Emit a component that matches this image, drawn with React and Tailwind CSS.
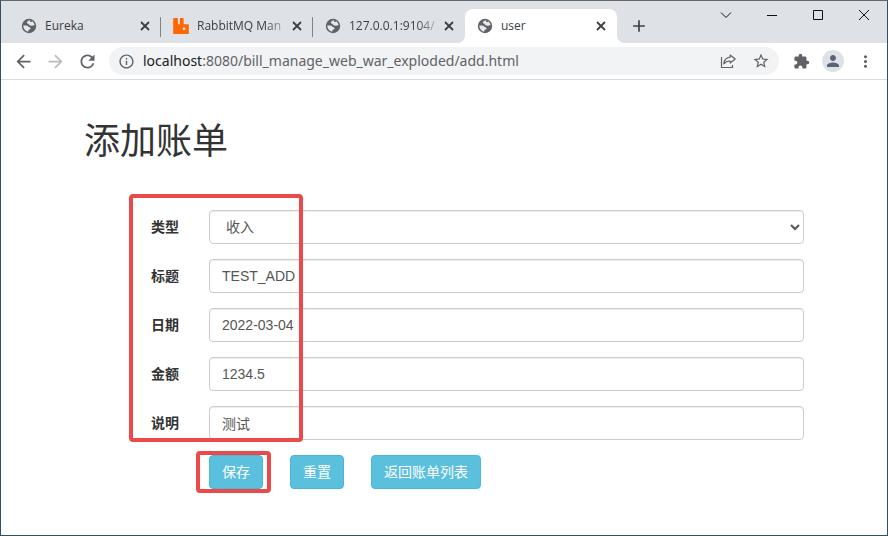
import React from "react";
import {
  MdAdd, MdArrowBack, MdArrowForward, MdRefresh,
  MdInfoOutline, MdStarBorder, MdExtension, MdPerson, MdMoreVert,
} from "react-icons/md";

const GlobeIcon = () => (
  <svg viewBox="0 0 16 16" className="size-4 shrink-0" aria-hidden="true">
    <circle cx="8" cy="8" r="7.2" fill="#5f6368" />
    <path
      fill="#e4e7eb"
      d="M9.200 2.200C7.600 2.500 6 3.400 5.800 4.600c-.1.900.7 1 1.400 1.200.8.200.6 1.300 1.500 1.500 1 .2 1.300.6 2.300.5 1-.2 1.400-.9 2.600-.6-.3-1.700-1.100-3-2.500-3.900-.5.900-1.400 1-1.900.6-.4-.4.2-1 0-1.700zM2.300 7.600c1.300-.3 2.700-.2 3.900.2 1.500.5 1.300 1.500 2.700 1.700.9.200.9 1.200.2 1.800-.8.600-1.600.6-1.800 1.400-.1.500-.2.900-.5 1.100C4.200 13 2.300 10.700 2.300 7.600z"
    />
  </svg>
);

const RabbitIcon = () => (
  <svg viewBox="0 0 16 16" className="size-4 shrink-0" fill="#ff6600" aria-hidden="true">
    <path
      fillRule="evenodd"
      d="M1 0h3.200q.7 0 .7.700v5q0 .6.6.6h.8q.6 0 .6-.6v-5q0-.7.7-.7h2.300q.7 0 .7.700v5q0 .6.6.6h4q.6 0 .6.6v8.500q0 .6-.6.6H.8q-.6 0-.6-.6V.800Q.2 0 1 0zM9.800 10v1.500q0 .6.6.6h1.400q.6 0 .6-.6V10q0-.6-.6-.6h-1.400q-.6 0-.6.6z"
    />
  </svg>
);

const ShareIcon = () => (
  <svg viewBox="0 0 16 16" className="size-4" fill="none" stroke="#5f6368" strokeWidth="1.2" aria-hidden="true">
    <path d="M1.500 4v10.500h11V12" />
    <path strokeLinejoin="round" d="M10.200 2l5 4-5 4V8C7.500 7.900 5.500 8.700 3.800 10.800c.4-3.600 2.600-6.300 6.400-6.700z" />
  </svg>
);

const CloseIcon = () => (
  <svg viewBox="0 0 10 10" className="size-2.5" fill="none" stroke="#3c4043" strokeWidth="1.8" aria-hidden="true">
    <path d="M1 1l8 8M9 1L1 9" />
  </svg>
);

const TABS = [
  { title: "Eureka", icon: "globe", divider: true },
  { title: "RabbitMQ Man", icon: "rabbit", divider: true, faded: true },
  { title: "127.0.0.1:9104/", icon: "globe", faded: true },
  { title: "user", icon: "globe", active: true },
];

function Tab({ title, icon, divider, active, faded }) {
  return (
    <div
      className={
        "relative flex h-[34px] w-[152px] shrink items-center pl-3 pr-2 " +
        (active
          ? "rounded-t-lg bg-white before:absolute before:bottom-0 before:-left-2 before:size-2 before:bg-[radial-gradient(circle_at_0_0,#dee1e6_8px,#fff_8px)] after:absolute after:bottom-0 after:-right-2 after:size-2 after:bg-[radial-gradient(circle_at_100%_0,#dee1e6_8px,#fff_8px)]"
          : "")
      }
    >
      <button type="button" className="flex min-w-0 flex-1 items-center gap-2 text-left">
        {icon === "rabbit" ? <RabbitIcon /> : <GlobeIcon />}
        <span
          className={
            "min-w-0 flex-1 overflow-hidden whitespace-nowrap text-xs text-[#3c4043] " +
            (faded ? "[mask-image:linear-gradient(to_right,#000_68px,transparent_94px)]" : "")
          }
        >
          {title}
        </span>
      </button>
      <button type="button" aria-label={"Close " + title} className="flex w-4 shrink-0 justify-center">
        <CloseIcon />
      </button>
      {divider && <span className="absolute right-0 top-2 h-5 w-px bg-[#808387]" />}
    </div>
  );
}

const WINDOW_CONTROLS = [
  { label: "Search tabs", d: "M1 3.500l5 5 5-5" },
  { label: "Minimize", d: "M1 6.500h10" },
  { label: "Maximize", d: "M1.500 1.500h9v9h-9z" },
  { label: "Close", d: "M1 1l10 10M11 1L1 11" },
];

function Browser() {
  return (
    <header>
      <div className="flex h-[42px] bg-[#dee1e6] pl-2">
        <div className="flex min-w-0 items-end">
          {TABS.map((t) => <Tab key={t.title} {...t} />)}
          <button type="button" aria-label="New tab" className="flex h-[34px] w-11 items-center justify-center">
            <MdAdd className="size-[20px] text-[#3c4043]" />
          </button>
        </div>
        <div className="ml-auto flex">
          {WINDOW_CONTROLS.map((c) => (
            <button key={c.label} type="button" aria-label={c.label} className="flex h-7 w-[46px] items-center justify-center">
              <svg viewBox="0 0 12 12" className="size-3" fill="none" stroke="#111" strokeWidth="1"><path d={c.d} /></svg>
            </button>
          ))}
        </div>
      </div>
      <div className="flex h-[37px] items-center border-b border-[#dadce0] bg-white px-3 text-[#5f6368]">
        <div className="flex gap-[11px]">
          <button type="button" aria-label="Back"><MdArrowBack className="size-[21px]" /></button>
          <button type="button" aria-label="Forward" className="text-[#babcbe]"><MdArrowForward className="size-[21px]" /></button>
          <button type="button" aria-label="Reload"><MdRefresh className="size-[21px]" /></button>
        </div>
        <div className="ml-[11px] flex h-7 min-w-0 flex-1 items-center rounded-full bg-[#f1f3f4] px-[9px]">
          <MdInfoOutline className="size-[17px] shrink-0" />
          <a href="#" className="ml-2 min-w-0 flex-1 truncate font-['Noto_Sans',sans-serif] text-sm">
            <span className="text-[#202124]">localhost</span>:8080/bill_manage_web_war_exploded/add.html
          </a>
          <button type="button" aria-label="Share"><ShareIcon /></button>
          <button type="button" aria-label="Bookmark" className="ml-4"><MdStarBorder className="size-[18px]" /></button>
        </div>
        <button type="button" aria-label="Extensions" className="ml-[14px]"><MdExtension className="size-[17px]" /></button>
        <button type="button" aria-label="Profile" className="ml-3 flex size-[22px] items-center justify-center rounded-full bg-[#dee1e6] text-[#5a6478]">
          <MdPerson className="size-[18px]" />
        </button>
        <button type="button" aria-label="Menu" className="ml-3"><MdMoreVert className="size-[19px]" /></button>
      </div>
    </header>
  );
}

const CONTROL =
  "block h-[34px] w-full rounded border border-[#ccc] bg-white px-3 text-sm text-[#555] shadow-[inset_0_1px_1px_rgba(0,0,0,0.075)]";
const BUTTON =
  "h-[34px] rounded border border-[#46b8da] bg-[#5bc0de] px-3 text-sm text-white";
const MARKER =
  "pointer-events-none absolute rounded-sm border-4 border-[#ec4a4a]";

const FIELDS = [
  { id: "title", label: "标题", value: "TEST_ADD" },
  { id: "date", label: "日期", value: "2022-03-04" },
  { id: "money", label: "金额", value: "1234.5" },
  { id: "explain", label: "说明", value: "测试" },
];

function Row({ id, label, children }) {
  return (
    <div className="flex items-center">
      <label htmlFor={id} className="w-1/6 px-[15px] text-right text-sm font-bold">{label}</label>
      <div className="w-5/6 px-[15px]">{children}</div>
    </div>
  );
}

export default function App() {
  return (
    <div className="flex min-h-screen flex-col border border-[#2f5260] border-t-[#64666a] bg-white font-['Open_Sans','Noto_Sans_CJK_SC',sans-serif]">
      <Browser />
      <main className="mx-auto w-full max-w-[750px] pt-[42px] font-['Liberation_Sans','Noto_Sans_CJK_SC',sans-serif] text-[#333]">
        <h1 className="px-[15px] text-4xl font-normal">添加账单</h1>
        <form className="mt-12" onSubmit={(e) => e.preventDefault()}>
          <div className="relative flex flex-col gap-[15px]">
            <Row id="type" label="类型">
              <select id="type" className={CONTROL} defaultValue="收入">
                <option>收入</option>
                <option>支出</option>
              </select>
            </Row>
            {FIELDS.map((f) => (
              <Row key={f.id} id={f.id} label={f.label}>
                <input id={f.id} type="text" defaultValue={f.value} className={CONTROL} />
              </Row>
            ))}
            <div className={MARKER + " -top-4 left-[60px] h-[248px] w-[174px]"} />
          </div>
          <div className="mt-[15px] ml-[16.6667%] flex gap-[27px] px-[15px]">
            <div className="relative">
              <button type="submit" className={BUTTON}>保存</button>
              <div className={MARKER + " -top-1 -left-[13px] h-[42px] w-[75px]"} />
            </div>
            <button type="reset" className={BUTTON}>重置</button>
            <button type="button" className={BUTTON}>返回账单列表</button>
          </div>
        </form>
      </main>
    </div>
  );
}
